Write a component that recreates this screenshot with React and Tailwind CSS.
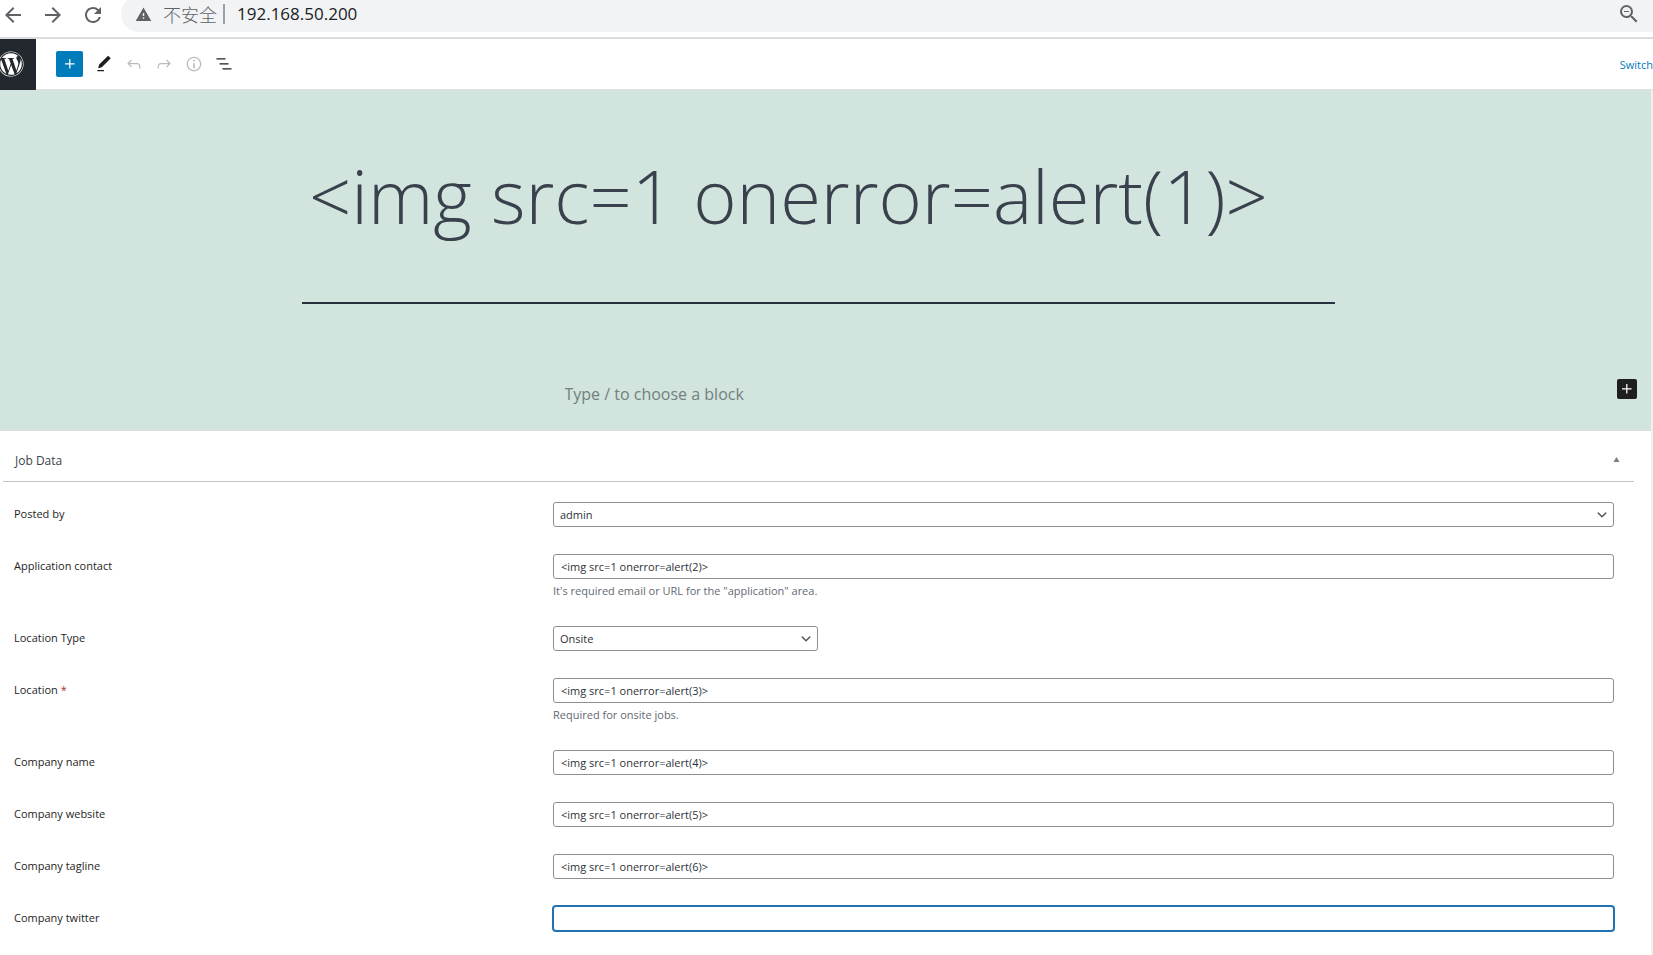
import { useId, useState } from "react";
import { MdArrowBack, MdArrowForward, MdRefresh, MdWarning, MdZoomOut } from "react-icons/md";
import { FaWordpress } from "react-icons/fa";

const PATHS = {
  plus: "M11 12.5V17.5H12.5V12.5H17.5V11H12.5V6H11V11H6V12.5H11Z",
  pencil: "m20.1 5.1L16.9 2 6.2 12.7l-1.3 4.4 4.5-1.3L20.1 5.1zM4 20.8h8v-1.5H4v1.5z",
  undo: "M18.3 11.7c-.6-.6-1.4-.9-2.3-.9H6.7l2.9-3.3-1.1-1-4.5 5L8.5 16l1-1-2.7-2.7H16c.5 0 .9.2 1.3.5 1 1 1 3.4 1 4.5v.3h1.5v-.2c0-1.5 0-4.3-1.5-5.7z",
  redo: "M15.6 6.5l-1.1 1 2.9 3.3H8c-.9 0-1.7.3-2.3.9-1.4 1.5-1.4 4.2-1.4 5.6v.2h1.5v-.3c0-1.1 0-3.5 1-4.5.3-.3.7-.5 1.3-.5h9.2L14.5 15l1.1 1.1 4.6-4.6-4.6-5z",
  info: "M12 3.2c-4.8 0-8.8 3.9-8.8 8.8 0 4.8 3.9 8.8 8.8 8.8 4.8 0 8.8-3.9 8.8-8.8 0-4.8-4-8.8-8.8-8.8zm0 16c-4 0-7.2-3.3-7.2-7.2C4.8 8 8 4.8 12 4.8s7.2 3.3 7.2 7.2c0 4-3.2 7.2-7.2 7.2zM11 17h2v-6h-2v6zm0-8h2V7h-2v2z",
  list: "M13.8 5.2H3v1.5h10.8V5.2zm-3.6 12v1.5H21v-1.5H10.2zm7.2-6H6.6v1.5h10.8v-1.5z",
};

function Glyph({ name, className = "size-5" }) {
  return (
    <svg viewBox="0 0 24 24" fill="currentColor" aria-hidden="true" className={className}>
      <path d={PATHS[name]} />
    </svg>
  );
}

function AddressBar() {
  return (
    <header className="flex h-[39px] items-start overflow-hidden border-b-2 border-[#dadce0] bg-white text-[#5f6368]">
      <nav className="flex h-[30px] shrink-0 items-center gap-4 pl-px">
        <button aria-label="Back"><MdArrowBack className="size-6" /></button>
        <button aria-label="Forward"><MdArrowForward className="size-6" /></button>
        <button aria-label="Reload"><MdRefresh className="size-6" /></button>
      </nav>
      <div className="-mt-1 ml-4 flex h-9 flex-1 items-center rounded-l-full bg-[#f1f3f4] pl-[14px] pr-3">
        <MdWarning className="size-[17px] shrink-0" />
        <span className="ml-[11px] shrink-0 font-['Noto_Sans_CJK_SC',sans-serif] text-[18px] font-light leading-6">不安全</span>
        <span className="ml-[6px] h-5 w-[2px] shrink-0 bg-[#9aa0a6]" />
        <input
          aria-label="Address"
          defaultValue="192.168.50.200"
          className="ml-3 min-w-0 flex-1 bg-transparent text-[17px] leading-6 text-[#202124] outline-none"
        />
        <button aria-label="Zoom out" className="shrink-0"><MdZoomOut className="size-6" /></button>
      </div>
    </header>
  );
}

function EditorToolbar() {
  return (
    <div className="flex h-[51px] items-center border-b border-[#e0e0e0] bg-white">
      <a href="#dashboard" aria-label="View posts" className="flex h-[51px] w-9 shrink-0 items-center overflow-hidden bg-[#23282e] text-white">
        <FaWordpress className="-ml-0.5 size-[26px] shrink-0" />
      </a>
      <button aria-label="Add block" className="ml-5 flex h-[26px] w-[27px] items-center justify-center rounded-[2px] bg-[#007cba] text-white">
        <Glyph name="plus" />
      </button>
      <div className="ml-[11px] flex items-center gap-[10px] text-[#1e1e1e]">
        <button aria-label="Tools"><Glyph name="pencil" /></button>
        <button aria-label="Undo" className="text-[#bbbbbb]"><Glyph name="undo" /></button>
        <button aria-label="Redo" className="text-[#bbbbbb]"><Glyph name="redo" /></button>
        <button aria-label="Details" className="text-[#bbbbbb]"><Glyph name="info" /></button>
        <button aria-label="List view"><Glyph name="list" /></button>
      </div>
      <button className="ml-auto shrink-0 whitespace-nowrap pt-[2px] text-[11px] leading-4 text-[#007cba]">Switch</button>
    </div>
  );
}

function Canvas() {
  return (
    <section className="border-b border-[#dddddd] bg-[#d1e4dd] pb-[22px] pr-[14px] pt-[52px] text-[#39414d]">
      <div className="mx-auto w-full max-w-[1033px] border-b-2 border-[#28303d] pb-[52px]">
        <input
          aria-label="Post title"
          defaultValue="<img src=1 onerror=alert(1)>"
          className="block h-[108px] w-full bg-transparent pl-[7px] font-['Open_Sans',sans-serif] text-[74px] font-light leading-[108px] outline-none"
        />
      </div>
      <div className="mt-[75px] grid grid-cols-[1fr_508px_1fr] items-start">
        <input
          aria-label="Block"
          placeholder="Type / to choose a block"
          className="col-start-2 mt-px h-7 bg-transparent text-[16px] leading-6 outline-none placeholder:text-[#71807f]"
        />
        <button aria-label="Add block" className="flex size-5 items-center justify-center justify-self-end rounded-[2px] bg-[#1e1e1e] text-white">
          <Glyph name="plus" />
        </button>
      </div>
    </section>
  );
}

const BOX = "block h-[25px] rounded-[3px] border border-[#8c8f94] bg-white text-[11px] leading-4 text-[#2c3338] outline-none";

function Field({ label, required, help, options, value, narrow, active }) {
  const id = useId();
  const [current, setCurrent] = useState(value);
  const onChange = (e) => setCurrent(e.target.value);
  return (
    <div className="grid grid-cols-[539fr_1061fr]">
      <label htmlFor={id} className="pt-1 text-[11px] font-medium leading-4 text-[#1e1e1e]">
        {label}
        {required && <span className="font-normal text-[#b32d2e]"> *</span>}
      </label>
      <div>
        {options ? (
          <div className={narrow ? "grid w-1/4" : "grid w-full"}>
            <select id={id} value={current} onChange={onChange} className={`${BOX} col-start-1 row-start-1 w-full appearance-none pl-[6px] pr-6`}>
              {options.map((o) => <option key={o}>{o}</option>)}
            </select>
            <svg viewBox="0 0 20 20" fill="#50575e" aria-hidden="true" className="pointer-events-none col-start-1 row-start-1 mr-[5px] size-[14px] self-center justify-self-end">
              <path d="M5 6l5 5 5-5 2 1-7 7-7-7 2-1z" />
            </svg>
          </div>
        ) : (
          <input
            id={id}
            value={current}
            onChange={onChange}
            className={active ? `${BOX} w-full border-[#2271b1] px-[7px] ring-1 ring-[#2271b1]` : `${BOX} w-full px-[7px]`}
          />
        )}
        {help && <p className="pt-1 text-[11px] leading-4 text-[#646970]">{help}</p>}
      </div>
    </div>
  );
}

function JobData() {
  return (
    <section className="ml-[3px] mr-[17px] pb-5">
      <div className="flex h-[51px] items-center justify-between border-b border-[#c3c4c7] pl-3 pr-[14px] pt-[10px]">
        <h2 className="text-[12px] leading-4 text-[#3c434a]">Job Data</h2>
        <button aria-label="Toggle panel: Job Data" className="pb-1">
          <svg viewBox="0 0 6 5" fill="#787c82" className="h-[5px] w-[7px]"><path d="M3 0l3 5H0z" /></svg>
        </button>
      </div>
      <div className="flex flex-col gap-[27px] pl-[11px] pr-5 pt-5">
        <Field label="Posted by" options={["admin"]} value="admin" />
        <Field label="Application contact" value="<img src=1 onerror=alert(2)>" help={'It\'s required email or URL for the "application" area.'} />
        <Field label="Location Type" options={["Onsite", "Remote", "Hybrid"]} value="Onsite" narrow />
        <Field label="Location" required value="<img src=1 onerror=alert(3)>" help="Required for onsite jobs." />
        <Field label="Company name" value="<img src=1 onerror=alert(4)>" />
        <Field label="Company website" value="<img src=1 onerror=alert(5)>" />
        <Field label="Company tagline" value="<img src=1 onerror=alert(6)>" />
        <Field label="Company twitter" value="" active />
      </div>
    </section>
  );
}

export default function App() {
  return (
    <div className="flex min-h-screen flex-col bg-white font-['Open_Sans','Noto_Sans_CJK_SC',sans-serif]">
      <AddressBar />
      <EditorToolbar />
      <main className="flex-1 border-r-2 border-[#f0f0f0]">
        <Canvas />
        <JobData />
      </main>
    </div>
  );
}
